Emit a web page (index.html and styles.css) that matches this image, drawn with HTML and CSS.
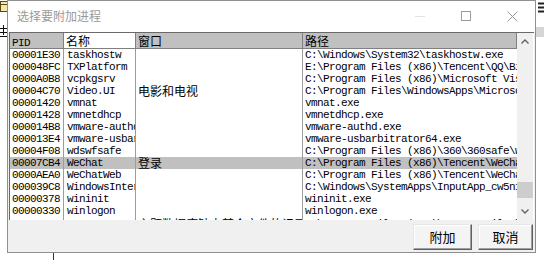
FILE: index.html
```html
<!DOCTYPE html>
<html lang="zh-CN">
<head>
<meta charset="utf-8">
<title>选择要附加进程</title>
<link rel="stylesheet" href="styles.css">
</head>
<body>
<div class="side-left">
  <svg class="bg-icon" width="7" height="13" viewBox="0 0 7 13"><rect x="0.5" y="1.5" width="7" height="10" fill="#f4e7a8" stroke="#5a4a10"/><line x1="0" y1="4.5" x2="7" y2="4.5" stroke="#5a4a10"/></svg>
  <svg class="bg-glyph" width="7" height="14" viewBox="0 0 7 14"><path d="M3.5 1V11M0 4.5H7M0 8.5H7M0 12.5H7" stroke="#111" fill="none"/></svg>
</div>
<div class="main">
  <div class="win">
    <div class="titlebar">
      <div class="title">选择要附加进程</div>
      <div class="ctl"><svg width="10" height="10" viewBox="0 0 10 10"><line x1="0" y1="5.5" x2="10" y2="5.5" stroke="#e2e2e2"/></svg></div>
      <div class="ctl"><svg width="10" height="10" viewBox="0 0 10 10"><rect x="0.5" y="0.5" width="9" height="9" fill="none" stroke="#9b9b9b"/></svg></div>
      <div class="ctl"><svg width="11" height="11" viewBox="0 0 11 11"><path d="M0.5 0.5L10.5 10.5M10.5 0.5L0.5 10.5" stroke="#9b9b9b" fill="none"/></svg></div>
    </div>
    <div class="list">
      <div class="grid">
        <div class="head">
          <div class="hc c1"><span class="mono">PID</span></div>
          <div class="hc c2 hot">名称</div>
          <div class="hc c3">窗口</div>
          <div class="hc c4">路径</div>
        </div>
        <div class="rows">
          <div class="row"><div class="c c1">00001E30</div><div class="c c2">taskhostw</div><div class="c c3"></div><div class="c c4">C:\Windows\System32\taskhostw.exe</div></div>
          <div class="row"><div class="c c1">000048FC</div><div class="c c2">TXPlatform</div><div class="c c3"></div><div class="c c4">E:\Program Files (x86)\Tencent\QQ\Bin\TXPlatform.exe</div></div>
          <div class="row"><div class="c c1">0000A0B8</div><div class="c c2">vcpkgsrv</div><div class="c c3"></div><div class="c c4">C:\Program Files (x86)\Microsoft Visual Studio\vcpkgsrv.exe</div></div>
          <div class="row"><div class="c c1">00004C70</div><div class="c c2">Video.UI</div><div class="c c3 cjk">电影和电视</div><div class="c c4">C:\Program Files\WindowsApps\Microsoft.ZuneVideo\Video.UI.exe</div></div>
          <div class="row"><div class="c c1">00001420</div><div class="c c2">vmnat</div><div class="c c3"></div><div class="c c4">vmnat.exe</div></div>
          <div class="row"><div class="c c1">00001428</div><div class="c c2">vmnetdhcp</div><div class="c c3"></div><div class="c c4">vmnetdhcp.exe</div></div>
          <div class="row"><div class="c c1">000014B8</div><div class="c c2">vmware-authd</div><div class="c c3"></div><div class="c c4">vmware-authd.exe</div></div>
          <div class="row"><div class="c c1">000013E4</div><div class="c c2">vmware-usbarbitrator64</div><div class="c c3"></div><div class="c c4">vmware-usbarbitrator64.exe</div></div>
          <div class="row"><div class="c c1">00004F08</div><div class="c c2">wdswfsafe</div><div class="c c3"></div><div class="c c4">C:\Program Files (x86)\360\360safe\wdswfsafe.exe</div></div>
          <div class="row sel"><div class="c c1">00007CB4</div><div class="c c2">WeChat</div><div class="c c3 cjk">登录</div><div class="c c4">C:\Program Files (x86)\Tencent\WeChat\WeChat.exe</div></div>
          <div class="row"><div class="c c1">0000AEA0</div><div class="c c2">WeChatWeb</div><div class="c c3"></div><div class="c c4">C:\Program Files (x86)\Tencent\WeChat\WeChatWeb.exe</div></div>
          <div class="row"><div class="c c1">000039C8</div><div class="c c2">WindowsInternal.ComposableShell</div><div class="c c3"></div><div class="c c4">C:\Windows\SystemApps\InputApp_cw5n1h2txyewy\InputApp.exe</div></div>
          <div class="row"><div class="c c1">00000378</div><div class="c c2">wininit</div><div class="c c3"></div><div class="c c4">wininit.exe</div></div>
          <div class="row"><div class="c c1">00000330</div><div class="c c2">winlogon</div><div class="c c3"></div><div class="c c4">winlogon.exe</div></div>
          <div class="row cut"><div class="c c1"></div><div class="c c2"></div><div class="c c3 cjk">主题数据库缺少某个文件的记录项</div><div class="c c4">C:\Program Files (x86)\Common Files\</div></div>
        </div>
      </div>
      <div class="sb">
        <div class="sb-btn"><svg width="8" height="5" viewBox="0 0 8 5"><path d="M0.5 4.5L4 1L7.5 4.5" fill="none" stroke="#606060" stroke-width="1.3"/></svg></div>
        <div class="sb-track"><div class="sb-thumb"></div></div>
        <div class="sb-btn down"><svg width="8" height="5" viewBox="0 0 8 5"><path d="M0.5 0.5L4 4L7.5 0.5" fill="none" stroke="#606060" stroke-width="1.3"/></svg></div>
      </div>
    </div>
    <div class="foot">
      <button class="btn b1">附加</button>
      <button class="btn b2">取消</button>
    </div>
  </div>
  <div class="below"><div class="tick"></div></div>
</div>
<div class="side-right">
  <svg width="8" height="15" viewBox="0 0 8 15"><path d="M2 3.5H8M2 7.5H8M2 11.5H8" stroke="#222" stroke-width="2"/></svg>
  <div class="side-block"></div>
</div>
</body>
</html>
```

FILE: styles.css
```css
html, body {
  margin: 0;
  padding: 0;
}
body {
  width: 544px;
  height: 260px;
  overflow: hidden;
  background: #ffffff;
  display: flex;
  font-family: "Noto Sans CJK SC", sans-serif;
}
.side-left {
  width: 7px;
  flex: none;
  display: flex;
  flex-direction: column;
}
.bg-icon {
  display: block;
  flex: none;
}
.bg-glyph {
  display: block;
  flex: none;
  margin-top: 11px;
}
.side-right {
  width: 8px;
  flex: none;
  display: flex;
  flex-direction: column;
}
.side-right svg {
  display: block;
  flex: none;
}
.side-block {
  margin-top: 12px;
  height: 10px;
  background: #d6d6d6;
}
.main {
  width: 529px;
  flex: none;
  display: flex;
  flex-direction: column;
}
.win {
  height: 253px;
  flex: none;
  box-sizing: border-box;
  border: 1px solid #8f8f8f;
  background: #f0f0f0;
  display: flex;
  flex-direction: column;
}
.titlebar {
  height: 31px;
  flex: none;
  background: #ffffff;
  display: flex;
  align-items: center;
  padding-left: 9px;
}
.title {
  flex: 1;
  font-size: 12px;
  color: #9a9a9a;
  line-height: 16px;
  margin-top: -2px;
}
.ctl {
  width: 46px;
  height: 31px;
  display: flex;
  align-items: center;
  justify-content: center;
}
.ctl svg {
  display: block;
  margin-top: -1px;
}
.list {
  height: 188px;
  flex: none;
  margin: 0 1px;
  box-sizing: border-box;
  border-left: 1px solid #6a6a6a;
  border-top: 1px solid #6a6a6a;
  background: #ffffff;
  display: flex;
}
.grid {
  width: 507px;
  flex: none;
  display: flex;
  flex-direction: column;
  overflow: hidden;
}
.head {
  display: flex;
  height: 16px;
  flex: none;
}
.hc {
  box-sizing: border-box;
  height: 16px;
  background: #c0c0c0;
  border-right: 1px solid #808080;
  border-bottom: 1px solid #808080;
  padding-left: 2px;
  font-size: 12px;
  line-height: 15px;
  color: #000;
  overflow: hidden;
  white-space: nowrap;
}
.hc.hot {
  background: #ffffff;
}
.mono {
  font-family: "Liberation Mono", monospace;
  font-size: 11px;
  letter-spacing: -0.6px;
}
.c1 { width: 54px; flex: none; }
.c2 { width: 72px; flex: none; }
.c3 { width: 167px; flex: none; }
.c4 { width: 214px; flex: none; }
.rows {
  flex: 1;
  overflow: hidden;
}
.row {
  display: flex;
  height: 12px;
}
.row.sel {
  background: #c0c0c0;
}
.c {
  box-sizing: border-box;
  height: 12px;
  border-right: 1px solid #9c9c9c;
  overflow: hidden;
  white-space: nowrap;
  font-family: "Liberation Mono", monospace;
  font-size: 11px;
  line-height: 12px;
  letter-spacing: -0.6px;
  color: #000;
  padding-left: 2px;
}
.c.c2 {
  padding-left: 3px;
}
.c.c4 {
  border-right: none;
}
.c.cjk {
  font-family: "Noto Sans CJK SC", sans-serif;
  font-size: 12px;
  letter-spacing: 0;
  line-height: 12px;
}
.row.cut .c {
  padding-top: 1px;
}
.sb {
  width: 16px;
  flex: none;
  background: #f0f0f0;
  display: flex;
  flex-direction: column;
}
.sb-btn {
  height: 16px;
  flex: none;
  display: flex;
  align-items: center;
  justify-content: center;
}
.sb-btn.down {
  height: 17px;
}
.sb-btn svg {
  display: block;
}
.sb-track {
  flex: 1;
}
.sb-thumb {
  margin-top: 133px;
  height: 16px;
  background: #cdcdcd;
}
.foot {
  flex: 1;
  display: flex;
  justify-content: flex-end;
  align-items: flex-start;
  gap: 6px;
  padding: 4px 2px 0 0;
}
.btn {
  height: 26px;
  box-sizing: border-box;
  border: 1px solid;
  border-color: #e6e6e6 #5f5f5f #5f5f5f #e6e6e6;
  box-shadow: inset -1px -1px 0 #a0a0a0, inset 1px 1px 0 #ffffff;
  background: #f4f4f4;
  font-family: "Noto Sans CJK SC", sans-serif;
  font-size: 13px;
  line-height: 18px;
  color: #000;
  padding: 0;
  margin: 0;
}
.b1 { width: 59px; }
.b2 { width: 55px; }
.below {
  height: 7px;
  flex: none;
}
.tick {
  margin-left: 46px;
  width: 1px;
  height: 7px;
  background: #333;
}
```
